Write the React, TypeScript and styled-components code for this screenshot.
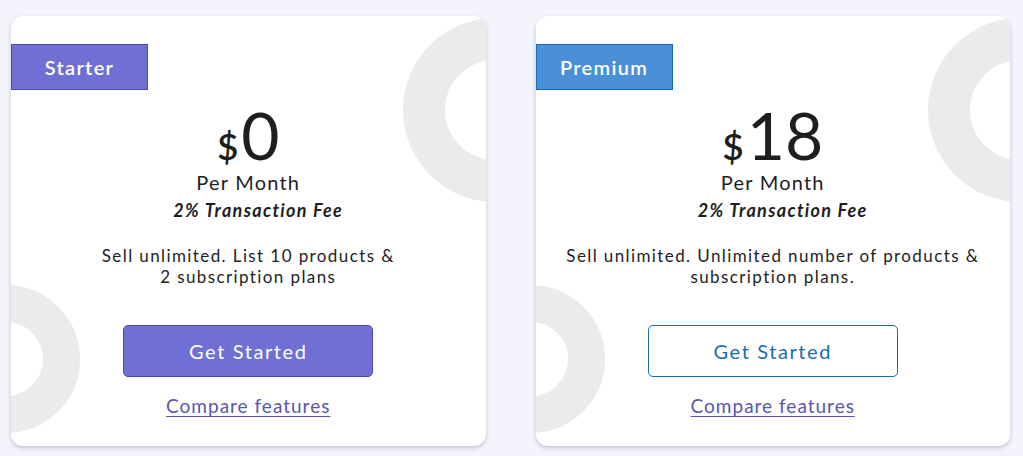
import React from "react";
import styled, { createGlobalStyle } from "styled-components";

const Global = createGlobalStyle`
  html, body { margin: 0; padding: 0; background: #f4f4fd; }
  body { font-family: Lato, "Open Sans", Arial, sans-serif; color: #1e1e1e; }
`;

const Page = styled.div`
  display: flex;
  gap: 50px;
  padding: 16px 13px 10px 11px;
`;

const Card = styled.div`
  position: relative;
  overflow: hidden;
  width: 475px;
  height: 430px;
  box-sizing: border-box;
  background: #fff;
  border-radius: 12px;
  box-shadow: 0 2px 4px rgba(60, 60, 90, 0.25);
  display: flex;
  flex-direction: column;
  align-items: center;
  padding-top: 28px;
`;

const Ring = styled.div<{ $x: number; $y: number; $r: number; $w: number }>`
  position: absolute;
  left: ${(p) => p.$x - p.$r}px;
  top: ${(p) => p.$y - p.$r}px;
  width: ${(p) => p.$r * 2}px;
  height: ${(p) => p.$r * 2}px;
  box-sizing: border-box;
  border-radius: 50%;
  border: ${(p) => p.$w}px solid #ebebeb;
  pointer-events: none;
`;

const Badge = styled.div<{ $bg: string; $border: string }>`
  position: relative;
  align-self: flex-start;
  width: 137px;
  height: 46px;
  box-sizing: border-box;
  background: ${(p) => p.$bg};
  border: 1px solid ${(p) => p.$border};
  color: #fff;
  font-size: 20px;
  font-weight: 600;
  letter-spacing: 1.3px;
  display: flex;
  align-items: center;
  justify-content: center;
`;

const Price = styled.div`
  position: relative;
  display: flex;
  align-items: baseline;
  margin-top: 12px;
  line-height: 1;
  color: #1e1e1e;
`;

const Dollar = styled.span`
  font-size: 37px;
  font-weight: 600;
  margin-right: 3px;
`;

const Amount = styled.span`
  font-size: 66px;
`;

const PerMonth = styled.div`
  position: relative;
  font-size: 20px;
  letter-spacing: 1.2px;
  margin-top: 2px;
  line-height: 24px;
`;

const Fee = styled.div`
  position: relative;
  font-size: 18px;
  font-weight: 700;
  font-style: italic;
  letter-spacing: 1.3px;
  line-height: 24px;
  margin: 4px 0 0 20px;
`;

const Desc = styled.p`
  position: relative;
  margin: 23px 0 0;
  font-size: 17px;
  line-height: 21px;
  letter-spacing: 1.4px;
  text-align: center;
  max-width: 440px;
`;

const Button = styled.button<{ $filled: boolean }>`
  position: relative;
  width: 250px;
  height: 52px;
  margin-top: 38px;
  border-radius: 5px;
  font-family: Lato, "Open Sans", Arial, sans-serif;
  font-size: 20px;
  letter-spacing: 1.6px;
  cursor: pointer;
  background: ${(p) => (p.$filled ? "#6f6fd6" : "#fff")};
  color: ${(p) => (p.$filled ? "#fff" : "#1a6bb0")};
  border: 1px solid ${(p) => (p.$filled ? "#4b4bb5" : "#1a6bb0")};
`;

const Compare = styled.a`
  position: relative;
  margin-top: 17px;
  font-size: 19px;
  letter-spacing: 1px;
  color: #5a55b0;
  text-decoration: underline;
  text-underline-offset: 3px;
  text-decoration-thickness: 1px;
`;

type Plan = {
  name: string;
  bg: string;
  border: string;
  amount: string;
  desc: React.ReactNode;
  filled: boolean;
};

const plans: Plan[] = [
  {
    name: "Starter",
    bg: "#6f6fd6",
    border: "#4b4bb5",
    amount: "0",
    desc: (
      <>
        Sell unlimited. List 10 products &amp;
        <br />2 subscription plans
      </>
    ),
    filled: true,
  },
  {
    name: "Premium",
    bg: "#4a8fd8",
    border: "#1a6bb5",
    amount: "18",
    desc: (
      <>
        Sell unlimited. Unlimited number of products &amp;
        <br />
        subscription plans.
      </>
    ),
    filled: false,
  },
];

export default function App() {
  return (
    <>
      <Global />
      <Page>
        {plans.map((p) => (
          <Card key={p.name}>
            <Ring $x={484} $y={94} $r={92} $w={42} />
            <Ring $x={-5} $y={343} $r={74} $w={37} />
            <Badge $bg={p.bg} $border={p.border}>
              {p.name}
            </Badge>
            <Price>
              <Dollar>$</Dollar>
              <Amount>{p.amount}</Amount>
            </Price>
            <PerMonth>Per Month</PerMonth>
            <Fee>2% Transaction Fee</Fee>
            <Desc>{p.desc}</Desc>
            <Button $filled={p.filled}>Get Started</Button>
            <Compare href="#">Compare features</Compare>
          </Card>
        ))}
      </Page>
    </>
  );
}
